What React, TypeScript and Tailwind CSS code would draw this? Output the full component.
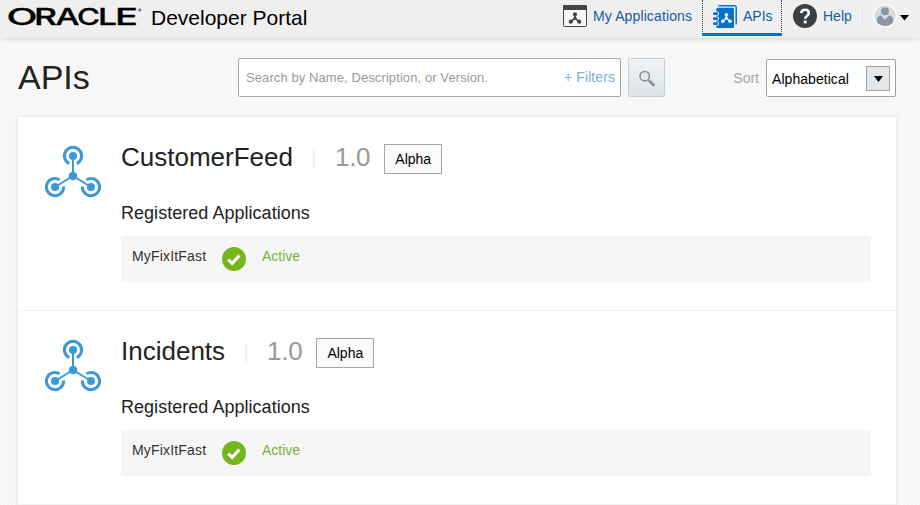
function NodeGlyph({ color }: { color: string }) {
  return (
    <g stroke={color} fill={color}>
      <path d="M0 0V-4.5M0 0L-4 3M0 0L4 3" strokeWidth="1.5" fill="none" />
      <circle r="1.7" stroke="none" />
      <circle cy="-4" r="2.1" stroke="none" />
      <circle cx="-4.2" cy="3.4" r="2.1" stroke="none" />
      <circle cx="4.2" cy="3.4" r="2.1" stroke="none" />
    </g>
  );
}

function ApiIcon() {
  return (
    <svg width="58" height="54" viewBox="0 0 58 54" className="block">
      <g stroke="#3b99d9" fill="none">
        <path d="M29 12V32L11 43M29 32L47 43" strokeWidth="2" />
        <path d="M25.2 19.6A8.6 8.6 0 1 1 32.8 19.6" strokeWidth="3" />
        <path d="M15.5 35.7A8.6 8.6 0 1 0 19.6 42.5" strokeWidth="3" />
        <path d="M42.5 35.7A8.6 8.6 0 1 1 38.4 42.5" strokeWidth="3" />
      </g>
      <g fill="#3b99d9">
        <circle cx="29" cy="12" r="4" />
        <circle cx="29" cy="32" r="4.3" />
        <circle cx="11" cy="43" r="4" />
        <circle cx="47" cy="43" r="4" />
      </g>
    </svg>
  );
}

function Header() {
  return (
    <header className="relative flex h-[38px] shrink-0 items-start bg-[#efefef] shadow-[0_1px_5px_rgba(0,0,0,0.15)]">
      <svg width="143" height="34" className="ml-[4px] block shrink-0">
        <text y="24.8" fontFamily="Inter, sans-serif" fontWeight="500" fontSize="22.8" fill="#000" stroke="#000" strokeWidth="0.3">
          <tspan x="2.5" textLength="31" lengthAdjust="spacingAndGlyphs">O</tspan><tspan x="30" textLength="23" lengthAdjust="spacingAndGlyphs">R</tspan><tspan x="51.5" textLength="24" lengthAdjust="spacingAndGlyphs">A</tspan><tspan x="73" textLength="23" lengthAdjust="spacingAndGlyphs">C</tspan><tspan x="94" textLength="19" lengthAdjust="spacingAndGlyphs">L</tspan><tspan x="111" textLength="23" lengthAdjust="spacingAndGlyphs">E</tspan>
        </text>
        <circle cx="135.7" cy="10" r="1.2" fill="#999" stroke="#666" strokeWidth="0.8" />
      </svg>
      <div className="ml-[4px] w-[160px] pt-[4px] text-[21px] leading-[27px] whitespace-nowrap text-black">Developer Portal</div>
      <nav className="ml-auto flex h-[38px] text-[14px] text-[#145c9e]">
        <div className="flex w-[139px] pt-[5px]">
          <svg width="24" height="22" className="block shrink-0">
            <rect x="0.5" y="0.5" width="23" height="21" rx="1" fill="#f7f7f7" stroke="#414547" />
            <path d="M0 1Q0 0 1 0H23Q24 0 24 1V5H0Z" fill="#414547" />
            <g transform="translate(12 13.3)"><NodeGlyph color="#414547" /></g>
          </svg>
          <span className="ml-[6px] pt-[3px] leading-[16px] tracking-[0.12px] whitespace-nowrap">My Applications</span>
        </div>
        <div className="flex h-[36px] w-[80px] border-x border-b-[3px] border-x-[#444] border-b-[#0572ce] pl-[10px] pt-[5px] [border-left-style:dotted] [border-right-style:dotted]">
          <svg width="25" height="24" className="block shrink-0">
            <path d="M5.5 0.8H21.5Q23.2 0.8 23.2 2.5V19.5" fill="none" stroke="#0572ce" strokeWidth="1.5" />
            <rect x="3.3" y="2.7" width="17.7" height="20.3" rx="1.5" fill="#0572ce" />
            <g fill="#efefef">
              <rect x="-1" y="6.4" width="7" height="4.4" rx="2" />
              <rect x="-1" y="11.4" width="7" height="4.4" rx="2" />
              <rect x="-1" y="16.4" width="7" height="4.4" rx="2" />
            </g>
            <g fill="#0572ce">
              <rect x="0" y="7.2" width="5" height="2.8" rx="1.2" />
              <rect x="0" y="12.2" width="5" height="2.8" rx="1.2" />
              <rect x="0" y="17.2" width="5" height="2.8" rx="1.2" />
            </g>
            <g transform="translate(13.4 13.3) scale(.85)"><NodeGlyph color="#fff" /></g>
          </svg>
          <span className="ml-[5px] pt-[3px] leading-[16px]">APIs</span>
        </div>
        <div className="flex w-[70px] pl-[11px] pt-[4px]">
          <svg width="24" height="24" className="block shrink-0">
            <circle cx="12" cy="12" r="12" fill="#3c4043" />
            <path d="M8.2 9.2Q8.4 5.8 12.1 5.8Q15.8 5.8 15.8 9Q15.8 10.7 13.9 12Q12.3 13 12.3 14.8" fill="none" stroke="#fff" strokeWidth="2.6" />
            <rect x="10.8" y="16.5" width="2.9" height="2.9" fill="#fff" />
          </svg>
          <span className="ml-[6px] pt-[4px] leading-[16px]">Help</span>
        </div>
        <div className="mt-[8px] ml-[10px] h-4 w-px bg-[#d9dfe3]" />
        <div className="ml-[10px] flex w-[47px] pt-[4px]">
          <svg width="24" height="24" className="block shrink-0">
            <defs><clipPath id="avatar"><circle cx="12" cy="12" r="10.3" /></clipPath></defs>
            <circle cx="12" cy="12" r="11.2" fill="#d6dce1" stroke="#fff" strokeWidth="1.2" />
            <circle cx="12" cy="7.2" r="4" fill="#8997a5" />
            <path clipPath="url(#avatar)" d="M4 16Q4 11.5 8 11.5L12 16L16 11.5Q20 11.5 20 16V19Q16 22 12 22Q8 22 4 19Z" fill="#8997a5" />
          </svg>
          <svg width="10" height="24" className="ml-[3px] block"><path d="M0 11H9L4.5 16.5Z" fill="#000" /></svg>
        </div>
      </nav>
    </header>
  );
}

function Toolbar() {
  return (
    <div className="flex h-[79px] shrink-0 items-start pr-[24px] pl-[18px]">
      <h1 className="w-[220px] pt-[19px] text-[34px] leading-[40px] text-[#222]">APIs</h1>
      <div className="mt-[20px] flex h-[39px] w-[383px] items-center justify-between rounded-[2px] border border-[#a6a8aa] bg-white pr-[5px] pl-[7px]">
        <span className="text-[13px] tracking-[0.09px] whitespace-nowrap text-[#999]">Search by Name, Description, or Version.</span>
        <span className="text-[14px] tracking-[0.08px] whitespace-nowrap text-[#7daede]">+ Filters</span>
      </div>
      <button className="mt-[20px] ml-[7px] flex h-[39px] w-[37px] items-center justify-center rounded-[2px] border border-[#c3ced7] bg-linear-to-b from-[#f0f2f4] to-[#dfe4e8]">
        <svg width="18" height="18" className="mt-[2px] block" fill="none" stroke="#8a8e92">
          <circle cx="6.7" cy="6.2" r="4.7" strokeWidth="1.6" />
          <path d="M10 9.5L12 11.5" strokeWidth="1.6" />
          <path d="M11.2 10.7L16.3 15.7" strokeWidth="2.7" />
        </svg>
      </button>
      <span className="mt-[32px] ml-auto text-[14px] leading-[16px] text-[#a5a5a5]">Sort</span>
      <div className="mt-[21px] ml-[7px] flex h-[38px] w-[130px] items-center justify-between rounded-[2px] border border-[#a0a2a4] bg-white pr-[5px] pl-[5px] text-[14px] text-black">
        <span className="pt-[2px] tracking-[0.05px]">Alphabetical</span>
        <span className="flex h-[25px] w-[24px] items-center justify-center border border-[#a0a2a4] bg-[#e4e8ea]">
          <svg width="9" height="6" className="mt-[1px] block"><path d="M0 0H9L4.5 6Z" fill="#000" /></svg>
        </span>
      </div>
    </div>
  );
}

function ApiRow({ name }: { name: string }) {
  return (
    <section className="flex h-[194px] shrink-0 border-b border-[#f3f3f3] pr-[25px] pl-[26px]">
      <div className="w-[77px] pt-[27px]"><ApiIcon /></div>
      <div className="flex-1">
        <div className="flex h-[57px] items-start">
          <h2 className="pt-[25px] text-[26px] leading-[30px] whitespace-nowrap text-[#222]">{name}</h2>
          <div className="mt-[32px] ml-[20px] h-5 w-[2px] bg-[#f0f0f0]" />
          <span className="ml-[20px] pt-[25px] text-[26px] leading-[30px] tracking-[-0.3px] text-[#999]">1.0</span>
          <span className="mt-[27px] ml-[14px] flex h-[30px] w-[58px] items-center justify-center border border-[#a6a6a6] bg-[#fafafa] text-[14px] text-black">Alpha</span>
        </div>
        <h3 className="mt-[28px] text-[18px] leading-[22px] tracking-[0.03px] text-[#222]">Registered Applications</h3>
        <div className="mt-[12px] flex h-[46px] rounded-[2px] bg-[#f6f6f6] pl-[11px] text-[14px]">
          <span className="w-[90px] pt-[12px] leading-[16px] tracking-[0.17px] text-[#333]">MyFixItFast</span>
          <svg width="24" height="24" className="mt-[11px] block">
            <circle cx="12" cy="12" r="12" fill="#76b51b" />
            <path d="M6.2 12.7L10.2 16.3L17.4 8.5" fill="none" stroke="#fff" strokeWidth="3.1" />
          </svg>
          <span className="ml-[16px] pt-[12px] leading-[16px] text-[#76b33a]">Active</span>
        </div>
      </div>
    </section>
  );
}

export default function App() {
  return (
    <div className="flex h-[505px] w-[920px] flex-col overflow-hidden bg-[#f8f8f8] bg-[repeating-linear-gradient(45deg,#f5f5f5_0px,#f5f5f5_1.414px,#f9f9f9_1.414px,#f9f9f9_2.828px)] font-['Liberation_Sans',Arial,sans-serif]">
      <Header />
      <Toolbar />
      <main className="ml-[18px] flex h-[400px] w-[878px] shrink-0 flex-col bg-white shadow-[0_0_4px_rgba(0,0,0,0.1)]">
        <ApiRow name="CustomerFeed" />
        <ApiRow name="Incidents" />
      </main>
    </div>
  );
}
